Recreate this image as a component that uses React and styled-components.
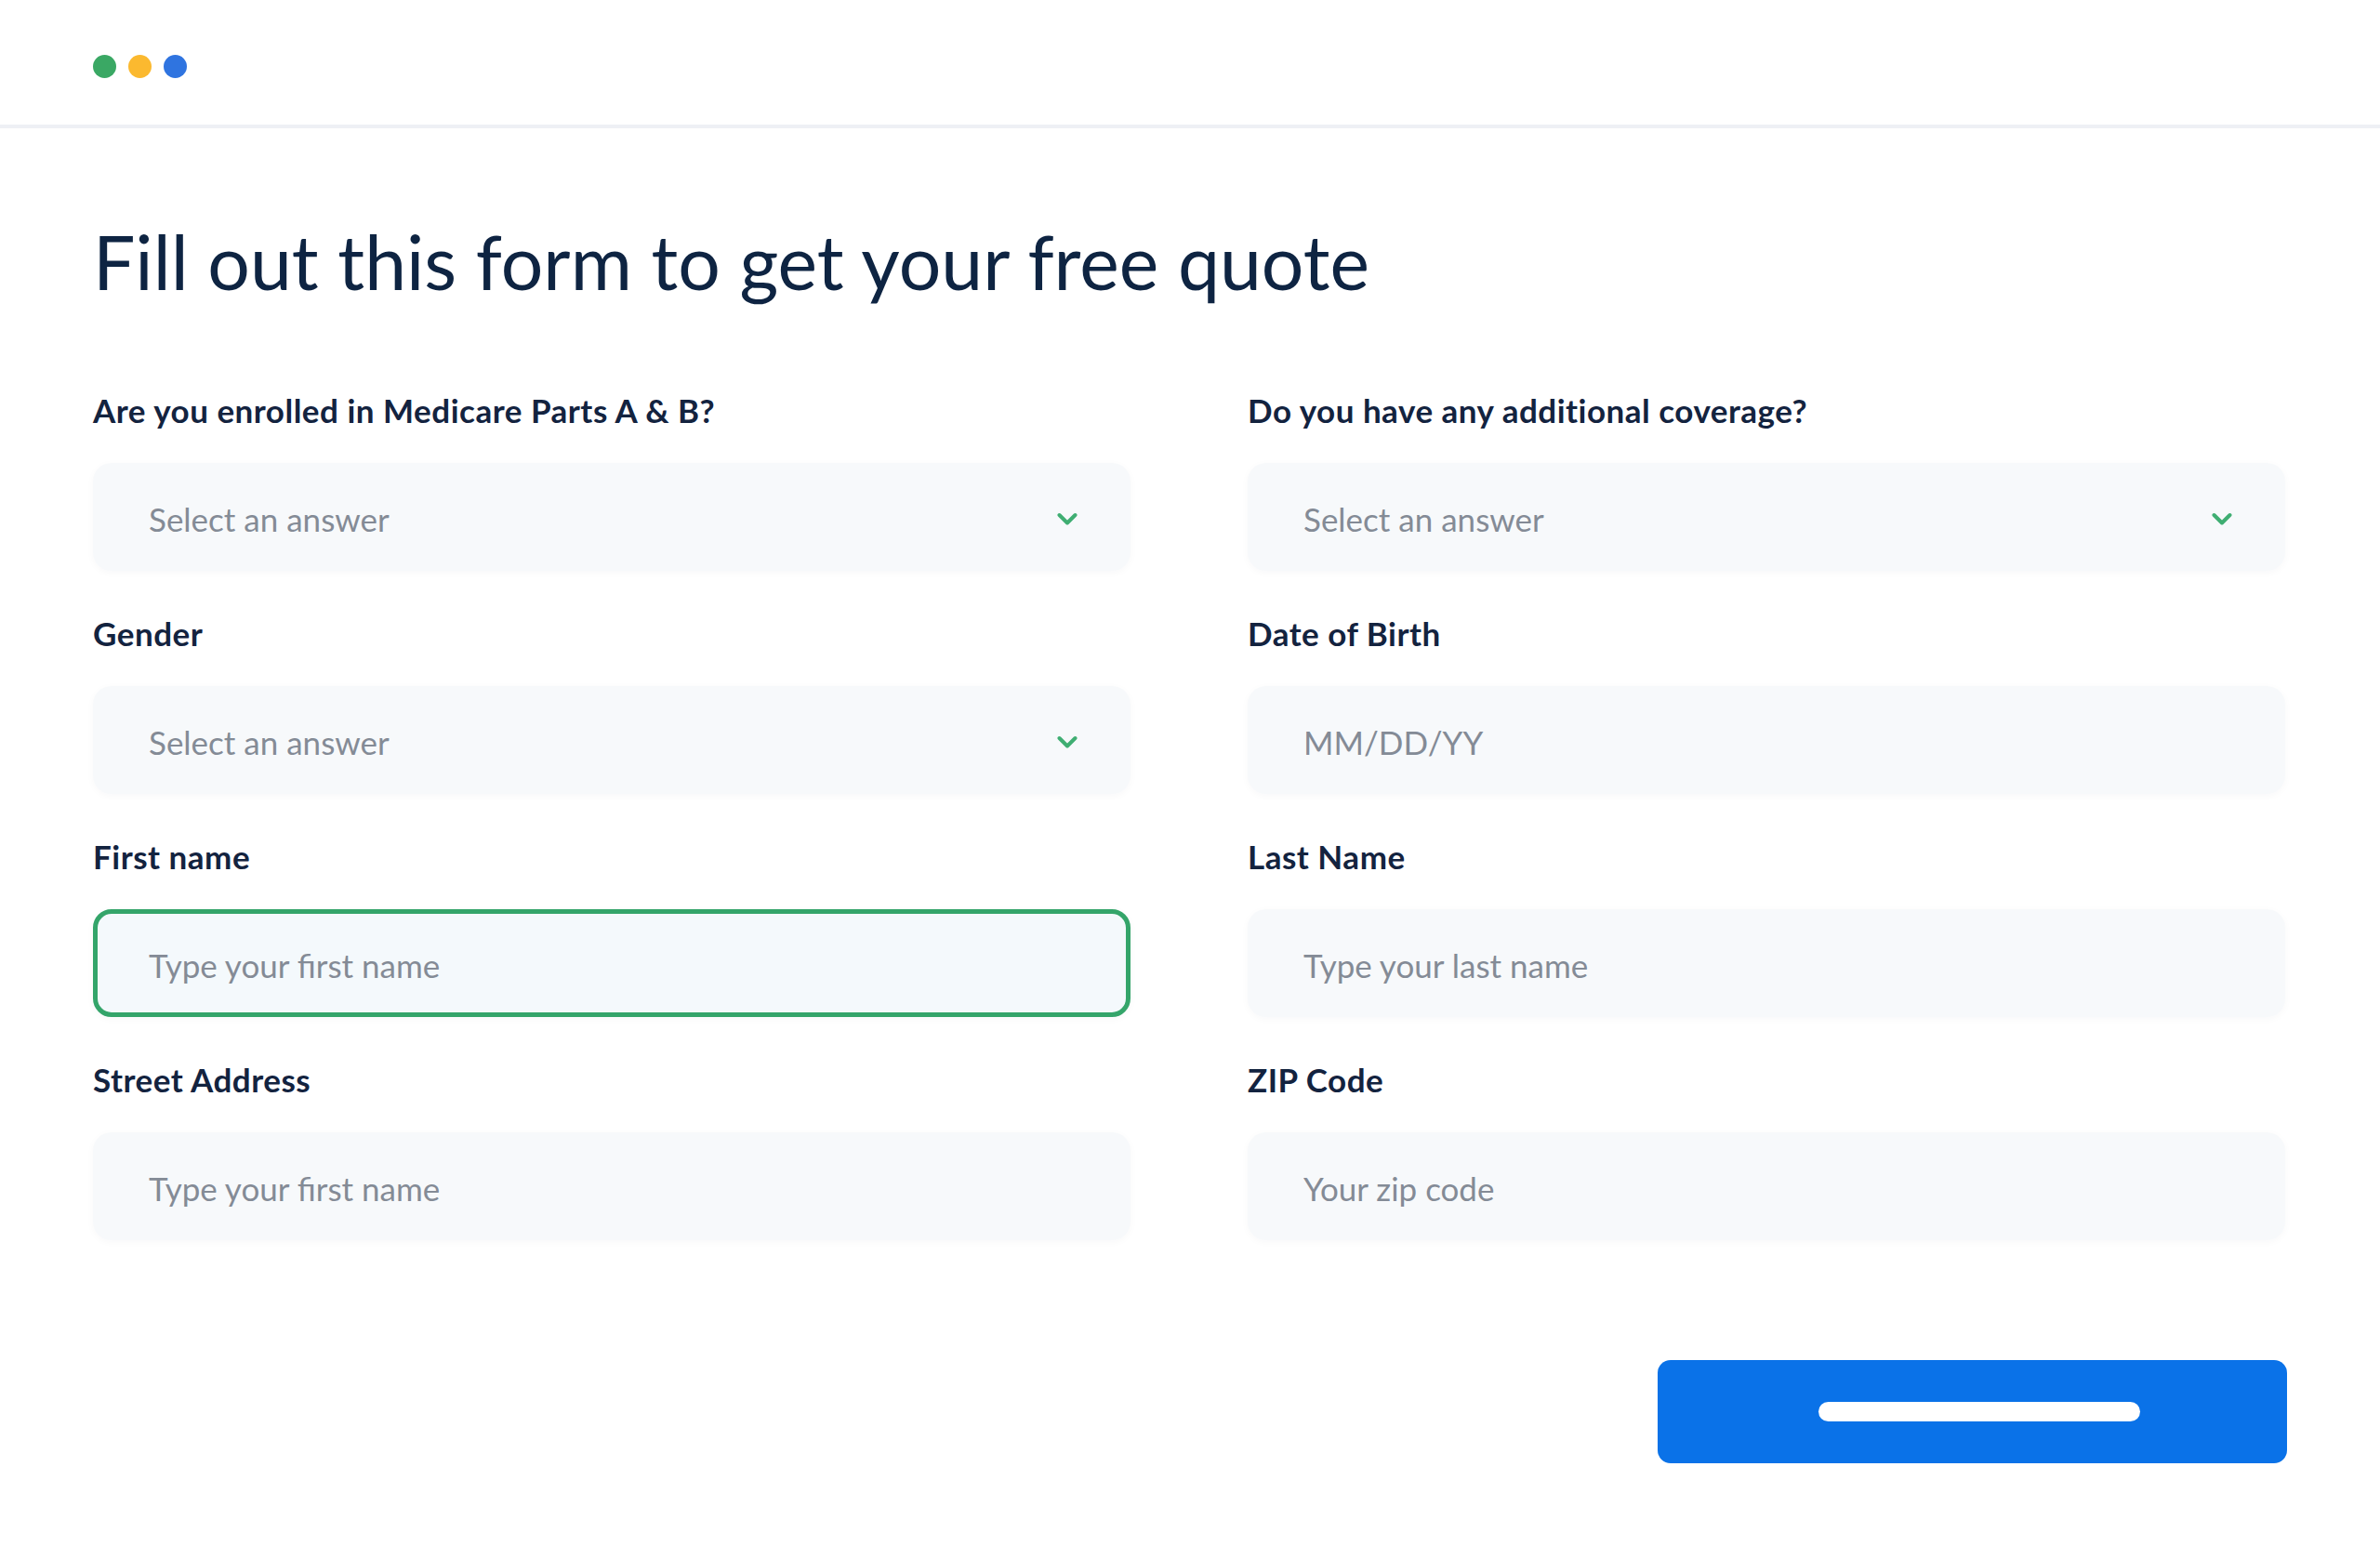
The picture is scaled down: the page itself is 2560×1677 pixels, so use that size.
import React from 'react';
import styled, { createGlobalStyle } from 'styled-components';

const GlobalStyle = createGlobalStyle`
  html, body {
    margin: 0;
    padding: 0;
    background: #ffffff;
  }
  body {
    font-family: 'Lato', 'Open Sans', sans-serif;
    color: #0e2442;
  }
  * {
    box-sizing: border-box;
  }
`;

const fields = [
  { label: 'Are you enrolled in Medicare Parts A & B?', placeholder: 'Select an answer', select: true },
  { label: 'Do you have any additional coverage?', placeholder: 'Select an answer', select: true },
  { label: 'Gender', placeholder: 'Select an answer', select: true },
  { label: 'Date of Birth', placeholder: 'MM/DD/YY' },
  { label: 'First name', placeholder: 'Type your first name', focused: true },
  { label: 'Last Name', placeholder: 'Type your last name' },
  { label: 'Street Address', placeholder: 'Type your first name' },
  { label: 'ZIP Code', placeholder: 'Your zip code' },
];

const Chevron = () => (
  <svg width="22" height="14" viewBox="0 0 22 14" fill="none">
    <path
      d="M2.5 3 L11 11.5 L19.5 3"
      stroke="#3fae72"
      strokeWidth="4"
      strokeLinecap="round"
      strokeLinejoin="round"
    />
  </svg>
);

const App = () => {
  return (
    <>
      <GlobalStyle />
      <Page>
        <Header>
          <Dot color="#3aa864" />
          <Dot color="#fbb92f" />
          <Dot color="#2f74e0" />
        </Header>

        <Main>
          <Title>Fill out this form to get your free quote</Title>

          <FormGrid>
            {fields.map((f, i) => (
              <Field key={i}>
                <Label>{f.label}</Label>
                {f.select ? (
                  <SelectBox>
                    <Placeholder>{f.placeholder}</Placeholder>
                    <Chevron />
                  </SelectBox>
                ) : (
                  <TextInput placeholder={f.placeholder} $focused={f.focused} />
                )}
              </Field>
            ))}
          </FormGrid>

          <Actions>
            <SubmitButton type="button">
              <ButtonBar />
            </SubmitButton>
          </Actions>
        </Main>
      </Page>
    </>
  );
};

export default App;

const Page = styled.div`
  width: 2560px;
  min-height: 1677px;
  background: #ffffff;
`;

const Header = styled.header`
  height: 138px;
  padding: 8px 100px 0;
  display: flex;
  align-items: center;
  gap: 13px;
  border-bottom: 4px solid #eef0f5;
`;

const Dot = styled.span`
  width: 25px;
  height: 25px;
  border-radius: 50%;
  background-color: ${({ color }) => color};
`;

const Main = styled.main`
  padding: 92px 100px 0;
`;

const Title = styled.h1`
  margin: 0;
  font-size: 80.5px;
  line-height: 103px;
  font-weight: 400;
  color: #0e2442;
  height: 103px;
`;

const FormGrid = styled.div`
  margin-top: 88px;
  display: grid;
  grid-template-columns: 1116px 1116px;
  column-gap: 126px;
  row-gap: 47px;
`;

const Field = styled.div`
  display: flex;
  flex-direction: column;
  gap: 37px;
`;

const Label = styled.label`
  font-size: 35px;
  line-height: 40px;
  font-weight: 700;
  letter-spacing: 0.5px;
  color: #13233f;
`;

const boxBase = `
  height: 116px;
  width: 100%;
  border-radius: 20px;
  background-color: #f7f9fb;
  box-shadow: 0 2px 8px rgba(20, 40, 70, 0.03);
  font-family: 'Lato', 'Open Sans', sans-serif;
  font-size: 35px;
  color: #848b96;
`;

const SelectBox = styled.div`
  ${boxBase}
  display: flex;
  align-items: center;
  justify-content: space-between;
  padding: 4px 57px 0 60px;
  cursor: pointer;
`;

const Placeholder = styled.span`
  color: #848b96;
`;

const TextInput = styled.input`
  ${boxBase}
  padding: 4px 0 0 60px;
  outline: none;
  border: ${({ $focused }) => ($focused ? '5px solid #34a56a' : '0')};
  padding-left: ${({ $focused }) => ($focused ? '55px' : '60px')};
  background-color: ${({ $focused }) => ($focused ? '#f4f9fc' : '#f7f9fb')};
  &::placeholder {
    color: #848b96;
  }
`;

const Actions = styled.div`
  margin-top: 129px;
  display: flex;
  justify-content: flex-end;
`;

const SubmitButton = styled.button`
  width: 677px;
  height: 111px;
  border: none;
  border-radius: 14px;
  background-color: #0a72e8;
  display: flex;
  align-items: center;
  justify-content: center;
  cursor: pointer;
`;

const ButtonBar = styled.span`
  width: 346px;
  height: 21px;
  border-radius: 11px;
  background-color: #ffffff;
  margin-left: 14px;
`;
